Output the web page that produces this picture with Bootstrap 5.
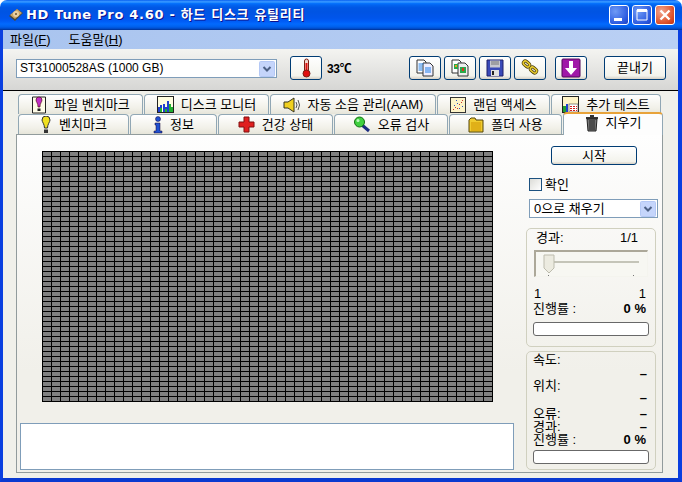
<!DOCTYPE html>
<html lang="ko">

<head>
    <meta charset="UTF-8">
    <title>HD Tune Pro 4.60 - 하드 디스크 유틸리티</title>
    <link href="https://cdn.jsdelivr.net/npm/bootstrap@5.3.2/dist/css/bootstrap.min.css" rel="stylesheet">
    <style>
        body {
            margin: 0;
            background: #fff;
            font-family: "Liberation Sans", "Noto Sans CJK KR", sans-serif;
            font-size: 13px;
            line-height: 14px;
            color: #000;
        }

        .app-win {
            width: 682px;
            height: 482px;
            overflow: hidden;
        }

        /* title bar */
        .title-bar {
            height: 30px;
            padding: 0 7px 0 8px;
            border-radius: 7px 7px 0 0;
            background: linear-gradient(180deg, #0058ee 0%, #3593ff 4%, #288eff 8%, #036ffc 12%, #0262ee 18%, #0057e5 26%, #0054e3 40%, #0055eb 60%, #005bf5 70%, #026afe 80%, #0062ef 88%, #0052d6 94%, #003092 100%);
        }

        .title-text {
            margin-left: 2px;
            color: #fff;
            font-family: "DejaVu Sans", "Noto Sans CJK KR", sans-serif;
            font-size: 13px;
            font-weight: 700;
            letter-spacing: .7px;
            text-shadow: 1px 1px #0f1089;
            white-space: nowrap;
        }

        .win-btn {
            width: 20px;
            height: 20px;
            margin-left: 3px;
            border: 1px solid #fff;
            border-radius: 3px;
            background: radial-gradient(circle at 30% 30%, #6f9af5, #2c5be0 70%, #1c3fc0);
        }

        .win-btn.win-close {
            background: radial-gradient(circle at 30% 30%, #f0a590, #e0542c 65%, #c03010);
        }

        /* frame around everything under the title */
        .win-body {
            height: 452px;
            border-left: 3px solid #0a3fe0;
            border-right: 4px solid #0a3fe0;
            border-bottom: 4px solid #0a3ad0;
            background: #f0f0ea;
        }

        .menu-strip {
            height: 19px;
            margin: 0;
            padding-left: 7px;
            background: linear-gradient(90deg, #a9c4ef, #bad0f4);
        }

        .menu-strip a {
            margin-right: 18px;
            color: #000;
            text-decoration: none;
        }

        .tool-strip {
            height: 42px;
            padding: 7px 0 0 13px;
            border-bottom: 1px solid #000;
            background: linear-gradient(180deg, #f4f4f1, #d6d6d4);
        }

        .xp-select {
            height: 19px;
            padding: 0 0 0 3px;
            border: 1px solid #7f9db9;
            border-radius: 0;
            color: #000;
            font-size: 13px;
            line-height: 17px;
            background-color: #fff;
            background-image: url("data:image/svg+xml,%3Csvg xmlns='http://www.w3.org/2000/svg' width='16' height='16'%3E%3Crect x='.5' y='.5' width='15' height='15' rx='1' fill='%23c5d5fb' stroke='%23b4c8f5'/%3E%3Cpath d='M4.500 6l3.500 3.500L11.500 6' fill='none' stroke='%234d6185' stroke-width='2'/%3E%3C/svg%3E");
            background-position: right 1px center;
            background-size: 16px 16px;
            background-repeat: no-repeat;
        }

        .drive-select {
            width: 261px;
            margin-top: 3px;
            padding-left: 3px;
            font-size: 12px;
        }

        .xp-btn {
            height: 24px;
            padding: 0;
            border: 1px solid #003c74;
            border-radius: 3px;
            color: #000;
            font-size: 13px;
            line-height: 14px;
            background: linear-gradient(180deg, #fff, #f3f3ec 85%, #d6d0c5);
        }

        .xp-btn:hover {
            color: #000;
            border-color: #003c74;
            background: #fff;
        }

        .btn-square {
            width: 32px;
            margin-left: 3px;
        }

        .temp-btn {
            margin-left: 13px;
        }

        .temp-label {
            width: 84px;
            padding-left: 5px;
            font-size: 12px;
            font-weight: 700;
            letter-spacing: -.3px;
        }

        .down-btn {
            margin-left: 9px;
        }

        .quit-btn {
            width: 62px;
            margin-left: 17px;
        }

        /* tabs */
        .tab-area {
            padding: 3px 0 0 15px;
        }

        .tab-row {
            flex-wrap: nowrap;
            gap: 1px;
            border-bottom: 0;
        }

        .tab-row .nav-link {
            height: 20px;
            margin: 0;
            padding: 0;
            gap: 7px;
            border: 1px solid #91a7b4;
            border-bottom: 0;
            border-radius: 4px 4px 0 0;
            color: #000;
            white-space: nowrap;
            background: linear-gradient(180deg, #fff, #f1f0e8 70%, #e6e5da);
        }

        .tab-row .nav-link.active {
            position: relative;
            z-index: 2;
            height: 23px;
            margin-top: -2px;
            margin-bottom: -1px;
            padding-bottom: 4px;
            border-top: 2px solid #e8a33a;
            border-left-color: #91a7b4;
            border-right-color: #91a7b4;
            background: #fdfdfd;
        }

        .w-file { width: 125px; }
        .w-mon { width: 125px; }
        .w-aam { width: 166px; }
        .w-rand { width: 113px; }
        .w-extra { width: 110px; }
        .w-bench { width: 111px; }
        .w-info { width: 87px; }
        .w-health { width: 115px; }
        .w-err { width: 114px; }
        .w-folder { width: 113px; }
        .w-erase { width: 100px; }

        /* main panel */
        .tab-panel {
            width: 647px;
            height: 339px;
            margin-left: 13px;
            border: 1px solid #919b9c;
            background: linear-gradient(180deg, #fefefe, #f1f0ea 70%);
        }

        .left-col {
            width: 497px;
            padding-left: 3px;
        }

        .block-map {
            width: 451px;
            height: 251px;
            margin: 16px 0 21px 22px;
            background-color: #808080;
            background-image: linear-gradient(to right, #000 1px, transparent 1px), linear-gradient(to bottom, #000 1px, transparent 1px);
            background-size: 9px 5px;
        }

        .log-box {
            width: 494px;
            height: 47px;
            border: 1px solid #7f9db9;
            background: #fff;
        }

        .right-col {
            width: 132px;
            margin-left: 12px;
        }

        .start-btn {
            display: block;
            width: 86px;
            height: 19px;
            margin: 11px 0 0 25px;
            line-height: 15px;
        }

        .verify-row {
            height: 13px;
            min-height: 0;
            margin: 13px 0 0 3px;
            padding: 0;
            gap: 3px;
        }

        .verify-row .form-check-input {
            float: none;
            width: 13px;
            height: 13px;
            margin: 0;
            border: 1px solid #1c5180;
            border-radius: 0;
            background: linear-gradient(135deg, #dcdcd7, #fff);
        }

        .fill-select {
            width: 129px;
            margin: 8px 0 0 3px;
            padding-left: 4px;
        }

        .grp-box {
            width: 130px;
            height: 119px;
            padding: 2px 6px 0;
            border: 1px solid #d0d0bf;
            border-radius: 5px;
        }

        .grp-top {
            margin-top: 10px;
        }

        .grp-bottom {
            margin-top: 4px;
            padding-top: 1px;
        }

        .stat-row {
            height: 12px;
            line-height: 12px;
        }

        .elapsed-row {
            padding: 0 11px 0 3px;
        }

        .seek-box {
            position: relative;
            width: 114px;
            height: 27px;
            margin: 5px 0 0 1px;
            border: solid #f4f4ee;
            border-width: 2px 1px 1px 2px;
            border-top-color: #aca899;
            border-left-color: #aca899;
            background: #f7f7f2;
        }

        .seek-line {
            position: absolute;
            left: 10px;
            right: 8px;
            top: 9px;
            height: 2px;
            background: #c4c4b8;
        }

        .seek-thumb {
            position: absolute;
            left: 7px;
            top: 1px;
        }

        .seek-tick {
            position: absolute;
            bottom: 0;
            width: 1px;
            height: 1px;
            background: #777;
        }

        .tick-a { left: 12px; }
        .tick-b { right: 13px; }

        .seek-ends {
            margin-top: 10px;
            padding: 0 3px 0 1px;
        }

        .rate-row {
            margin-top: 1px;
            padding-right: 3px;
        }

        .xp-progress {
            width: 116px;
            height: 14px;
            border: 1px solid #686868;
            border-radius: 3px;
            background: #fff;
        }

        .progress-gap {
            margin-top: 6px;
        }

        .dash-cell {
            padding-right: 2px;
            font-weight: 700;
        }

        .mt-1px { margin-top: 1px; }
        .mt-2px { margin-top: 2px; }

        .rate-last {
            padding-right: 3px;
        }
    </style>
</head>

<body>
    <div class="app-win d-flex flex-column">

        <!-- title bar -->
        <div class="title-bar d-flex align-items-center">
            <svg width="16" height="16" viewBox="0 0 16 16">
                <path d="M1 9L9 2l6 4-8 8z" fill="#4a4a3c" />
                <path d="M2 8l7-6 5 4-7 6z" fill="#c9a468" />
                <circle cx="8" cy="7" r="3" fill="#e8d0a0" />
                <circle cx="8" cy="7" r="1" fill="#6b5230" />
            </svg>
            <span class="title-text">HD Tune Pro 4.60 - 하드 디스크 유틸리티</span>
            <div class="ms-auto d-flex">
                <div class="win-btn d-flex align-items-end justify-content-start">
                    <svg width="18" height="18"><rect x="4" y="12" width="8" height="3" fill="#fff" /></svg>
                </div>
                <div class="win-btn">
                    <svg width="18" height="18"><path d="M4 4h10v10H4z" fill="none" stroke="#fff" /><rect x="4" y="3" width="10" height="3" fill="#fff" /></svg>
                </div>
                <div class="win-btn win-close">
                    <svg width="18" height="18"><path d="M4.500 4.500l9 9M13.500 4.500l-9 9" stroke="#fff" stroke-width="2.400" /></svg>
                </div>
            </div>
        </div>

        <div class="win-body">
            <div class="menu-strip d-flex align-items-center">
                <a href="#">파일(<u>F</u>)</a>
                <a href="#">도움말(<u>H</u>)</a>
            </div>

            <!-- toolbar -->
            <div class="tool-strip d-flex align-items-start">
                <select class="form-select xp-select drive-select">
                    <option>ST31000528AS (1000 GB)</option>
                </select>
                <button class="btn xp-btn btn-square temp-btn" type="button">
                    <svg width="18" height="20" viewBox="0 0 18 20">
                        <rect x="7.500" y="1" width="4" height="13" rx="2" fill="#f2d8d0" stroke="#7a1f14" />
                        <rect x="8.500" y="5" width="2" height="9" fill="#e01010" />
                        <circle cx="9.500" cy="15.500" r="3.500" fill="#e01010" stroke="#7a1f14" />
                    </svg>
                </button>
                <span class="temp-label align-self-center mb-2">33℃</span>
                <button class="btn xp-btn btn-square" type="button">
                    <svg width="20" height="20" viewBox="0 0 20 20">
                        <path d="M2 2h7l2 2v11H2z" fill="#fff" stroke="#333" />
                        <path d="M8 5h7l3 3v10H8z" fill="#eef" stroke="#333" />
                        <path d="M3.500 6h5M3.500 8h4M3.500 10h4M3.500 12h4M10 10h6M10 12h6M10 14h6" stroke="#1f7fe8" />
                    </svg>
                </button>
                <button class="btn xp-btn btn-square" type="button">
                    <svg width="20" height="20" viewBox="0 0 20 20">
                        <path d="M2 2h7l2 2v11H2z" fill="#fff" stroke="#333" />
                        <path d="M8 5h7l3 3v10H8z" fill="#eee" stroke="#333" />
                        <rect x="4" y="6" width="4" height="5" fill="#2aa84a" />
                        <rect x="10" y="9" width="6" height="6" fill="#2aa84a" />
                        <rect x="12" y="10" width="2" height="3" fill="#e03020" />
                        <rect x="5" y="7" width="2" height="2" fill="#e8a020" />
                    </svg>
                </button>
                <button class="btn xp-btn btn-square" type="button">
                    <svg width="20" height="20" viewBox="0 0 20 20">
                        <path d="M2 2h16v16H2z" fill="#3a4ab8" stroke="#20206a" />
                        <rect x="5" y="2.500" width="10" height="7" fill="#c8c8d0" />
                        <path d="M6 4h8M6 6h8" stroke="#777" />
                        <rect x="6" y="12" width="8" height="6" fill="#e0e0e0" />
                        <rect x="7" y="13" width="2" height="4" fill="#222" />
                    </svg>
                </button>
                <button class="btn xp-btn btn-square" type="button">
                    <svg width="20" height="20" viewBox="0 0 20 20">
                        <g fill="none" stroke="#4a3c08" stroke-width="3">
                            <rect x="3" y="4" width="7" height="4" rx="2" transform="rotate(40 6.500 6)" />
                            <rect x="10" y="10" width="7" height="4" rx="2" transform="rotate(40 13.500 12)" />
                        </g>
                        <g fill="none" stroke="#e8cc30" stroke-width="1.600">
                            <rect x="3" y="4" width="7" height="4" rx="2" transform="rotate(40 6.500 6)" />
                            <rect x="10" y="10" width="7" height="4" rx="2" transform="rotate(40 13.500 12)" />
                        </g>
                    </svg>
                </button>
                <button class="btn xp-btn btn-square down-btn" type="button">
                    <svg width="20" height="20" viewBox="0 0 20 20">
                        <rect x="1" y="1" width="18" height="18" rx="1" fill="#a018a8" stroke="#500858" />
                        <path d="M8 3h4v7h4l-6 7-6-7h4z" fill="#fff" />
                    </svg>
                </button>
                <button class="btn xp-btn quit-btn" type="button">끝내기</button>
            </div>

            <!-- tabs -->
            <div class="tab-area">
                <ul class="nav nav-tabs tab-row">
                    <li class="nav-item"><a class="nav-link w-file d-flex align-items-center justify-content-center" href="#">
                        <svg width="16" height="18" viewBox="0 0 16 18"><path d="M1.500 1h13v16h-13z" fill="#fffde8" stroke="#222" /><path d="M5 4a3 3 0 0 1 6 0c0 2-2 3-2 7H7c0-4-2-5-2-7z" fill="#c030c8" stroke="#400" stroke-width=".6" /><rect x="6.500" y="12.500" width="3" height="2.500" fill="#222" /></svg>
                        파일 벤치마크</a></li>
                    <li class="nav-item"><a class="nav-link w-mon d-flex align-items-center justify-content-center" href="#">
                        <svg width="17" height="17" viewBox="0 0 17 17"><rect x=".5" y=".5" width="16" height="16" fill="#fffde0" stroke="#222" /><path d="M1 16V11h2v-2h2v7zM6 16V8h2v3h2V5h2v11z" fill="#2040d0" /><path d="M3 16v-4h2v4zM12 16V8h2v3h2v5zM8 16v-3h2v3z" fill="#20b030" /></svg>
                        디스크 모니터</a></li>
                    <li class="nav-item"><a class="nav-link w-aam d-flex align-items-center justify-content-center" href="#">
                        <svg width="18" height="16" viewBox="0 0 18 16"><path d="M1 5h4l6-4v14l-6-4H1z" fill="#f0d020" stroke="#332" /><path d="M13 5q2 3 0 6M15 3q3 5 0 10" fill="none" stroke="#555" /></svg>
                        자동 소음 관리(AAM)</a></li>
                    <li class="nav-item"><a class="nav-link w-rand d-flex align-items-center justify-content-center" href="#">
                        <svg width="16" height="16" viewBox="0 0 16 16"><rect x=".5" y=".5" width="15" height="15" fill="#fdf4c8" stroke="#333" /><path d="M3 12h1v1H3zM5 10h1v1H5zM7 11h1v1H7zM9 7h1v1H9zM11 5h1v1h-1zM12 3h1v1h-1z" fill="#d03030" /><path d="M4 8h1v1H4zM7 6h1v1H7zM9 11h1v1H9zM12 9h1v1h-1zM6 3h1v1H6z" fill="#3050c0" /></svg>
                        랜덤 액세스</a></li>
                    <li class="nav-item"><a class="nav-link w-extra d-flex align-items-center justify-content-center" href="#">
                        <svg width="17" height="17" viewBox="0 0 17 17"><rect x=".5" y=".5" width="16" height="16" fill="#fff4c8" stroke="#222" /><path d="M1 16v-6h3v6z" fill="#20a030" /><path d="M4 16V8h2v8z" fill="#2040d0" /><rect x="7" y="8" width="9" height="8" fill="#fff" stroke="#444" stroke-width=".6" /><path d="M8 10h2v1H8zM11 10h2v1h-2zM14 10h1v1h-1zM8 12h2v1H8zM11 12h2v1h-2zM14 12h1v1h-1zM8 14h2v1H8zM11 14h2v1h-2zM14 14h1v1h-1z" fill="#d02020" /></svg>
                        추가 테스트</a></li>
                </ul>
                <ul class="nav nav-tabs tab-row">
                    <li class="nav-item"><a class="nav-link w-bench d-flex align-items-center justify-content-center" href="#">
                        <svg width="12" height="18" viewBox="0 0 12 18"><path d="M2 4a4 4 0 0 1 8 0c0 2-2.500 4-2.500 8h-3C4.500 8 2 6 2 4z" fill="#f0e020" stroke="#333" /><rect x="4" y="13.500" width="4" height="3.500" fill="#333" /></svg>
                        벤치마크</a></li>
                    <li class="nav-item"><a class="nav-link w-info d-flex align-items-center justify-content-center" href="#">
                        <svg width="10" height="18" viewBox="0 0 10 18"><circle cx="5" cy="3" r="2.500" fill="#2050d0" stroke="#103" stroke-width=".5" /><path d="M2 7h5v8h2v2H1v-2h2V9H2z" fill="#2050d0" stroke="#103" stroke-width=".5" /></svg>
                        정보</a></li>
                    <li class="nav-item"><a class="nav-link w-health d-flex align-items-center justify-content-center" href="#">
                        <svg width="17" height="17" viewBox="0 0 17 17"><path d="M6 1h5v5h5v5h-5v5H6v-5H1V6h5z" fill="#e02020" stroke="#801010" /></svg>
                        건강 상태</a></li>
                    <li class="nav-item"><a class="nav-link w-err d-flex align-items-center justify-content-center" href="#">
                        <svg width="18" height="17" viewBox="0 0 18 17"><path d="M9 9l7 6" stroke="#1c2c80" stroke-width="3" /><circle cx="6.500" cy="6" r="5" fill="#40d040" stroke="#107010" /><circle cx="5" cy="4.500" r="1.500" fill="#c0f8c0" /></svg>
                        오류 검사</a></li>
                    <li class="nav-item"><a class="nav-link w-folder d-flex align-items-center justify-content-center" href="#">
                        <svg width="16" height="16" viewBox="0 0 16 16"><path d="M1 3l2-2h4l1 2h7v12H1z" fill="#f0cc30" stroke="#554408" /><path d="M3 5h10v9H3z" fill="#e0b018" /></svg>
                        폴더 사용</a></li>
                    <li class="nav-item"><a class="nav-link active w-erase d-flex align-items-center justify-content-center" href="#">
                        <svg width="14" height="18" viewBox="0 0 14 18"><path d="M1 3h12v2H1zM5 1h4v2H5z" fill="#333" /><path d="M2 5h10l-1 12H3z" fill="#777" stroke="#222" /><path d="M5 6v10M7 6v10M9 6v10" stroke="#222" /></svg>
                        지우기</a></li>
                </ul>
            </div>

            <!-- tab page -->
            <div class="tab-panel d-flex">
                <div class="left-col">
                    <div class="block-map"></div>
                    <div class="log-box"></div>
                </div>
                <div class="right-col">
                    <button class="btn xp-btn start-btn" type="button">시작</button>
                    <div class="form-check verify-row d-flex align-items-center">
                        <input class="form-check-input" type="checkbox" id="verify">
                        <label class="form-check-label" for="verify">확인</label>
                    </div>
                    <select class="form-select xp-select fill-select">
                        <option>0으로 채우기</option>
                    </select>

                    <div class="grp-box grp-top">
                        <div class="d-flex justify-content-between elapsed-row"><span>경과:</span><span>1/1</span></div>
                        <div class="seek-box">
                            <div class="seek-line"></div>
                            <div class="seek-tick tick-a"></div>
                            <div class="seek-tick tick-b"></div>
                            <svg class="seek-thumb" width="12" height="21" viewBox="0 0 12 21">
                                <path d="M1 2h10v13l-5 5-5-5z" fill="#ecebe0" stroke="#bdbcae" />
                            </svg>
                        </div>
                        <div class="d-flex justify-content-between seek-ends"><span>1</span><span>1</span></div>
                        <div class="d-flex justify-content-between rate-row"><span>진행률 :</span><b>0 %</b></div>
                        <div class="progress xp-progress progress-gap"></div>
                    </div>

                    <div class="grp-box grp-bottom">
                        <div class="stat-row mt-1px">속도:</div>
                        <div class="stat-row mt-2px text-end dash-cell">–</div>
                        <div class="stat-row">위치:</div>
                        <div class="stat-row text-end dash-cell">–</div>
                        <div class="stat-row mt-1 d-flex justify-content-between"><span>오류:</span><span class="dash-cell">–</span></div>
                        <div class="stat-row mt-1px d-flex justify-content-between"><span>경과:</span><span class="dash-cell">–</span></div>
                        <div class="stat-row mt-1px d-flex justify-content-between rate-last"><span>진행률 :</span><b>0 %</b></div>
                        <div class="progress xp-progress mt-1"></div>
                    </div>
                </div>
            </div>
        </div>
    </div>

    <script src="https://cdn.jsdelivr.net/npm/bootstrap@5.3.2/dist/js/bootstrap.bundle.min.js"></script>
</body>

</html>
